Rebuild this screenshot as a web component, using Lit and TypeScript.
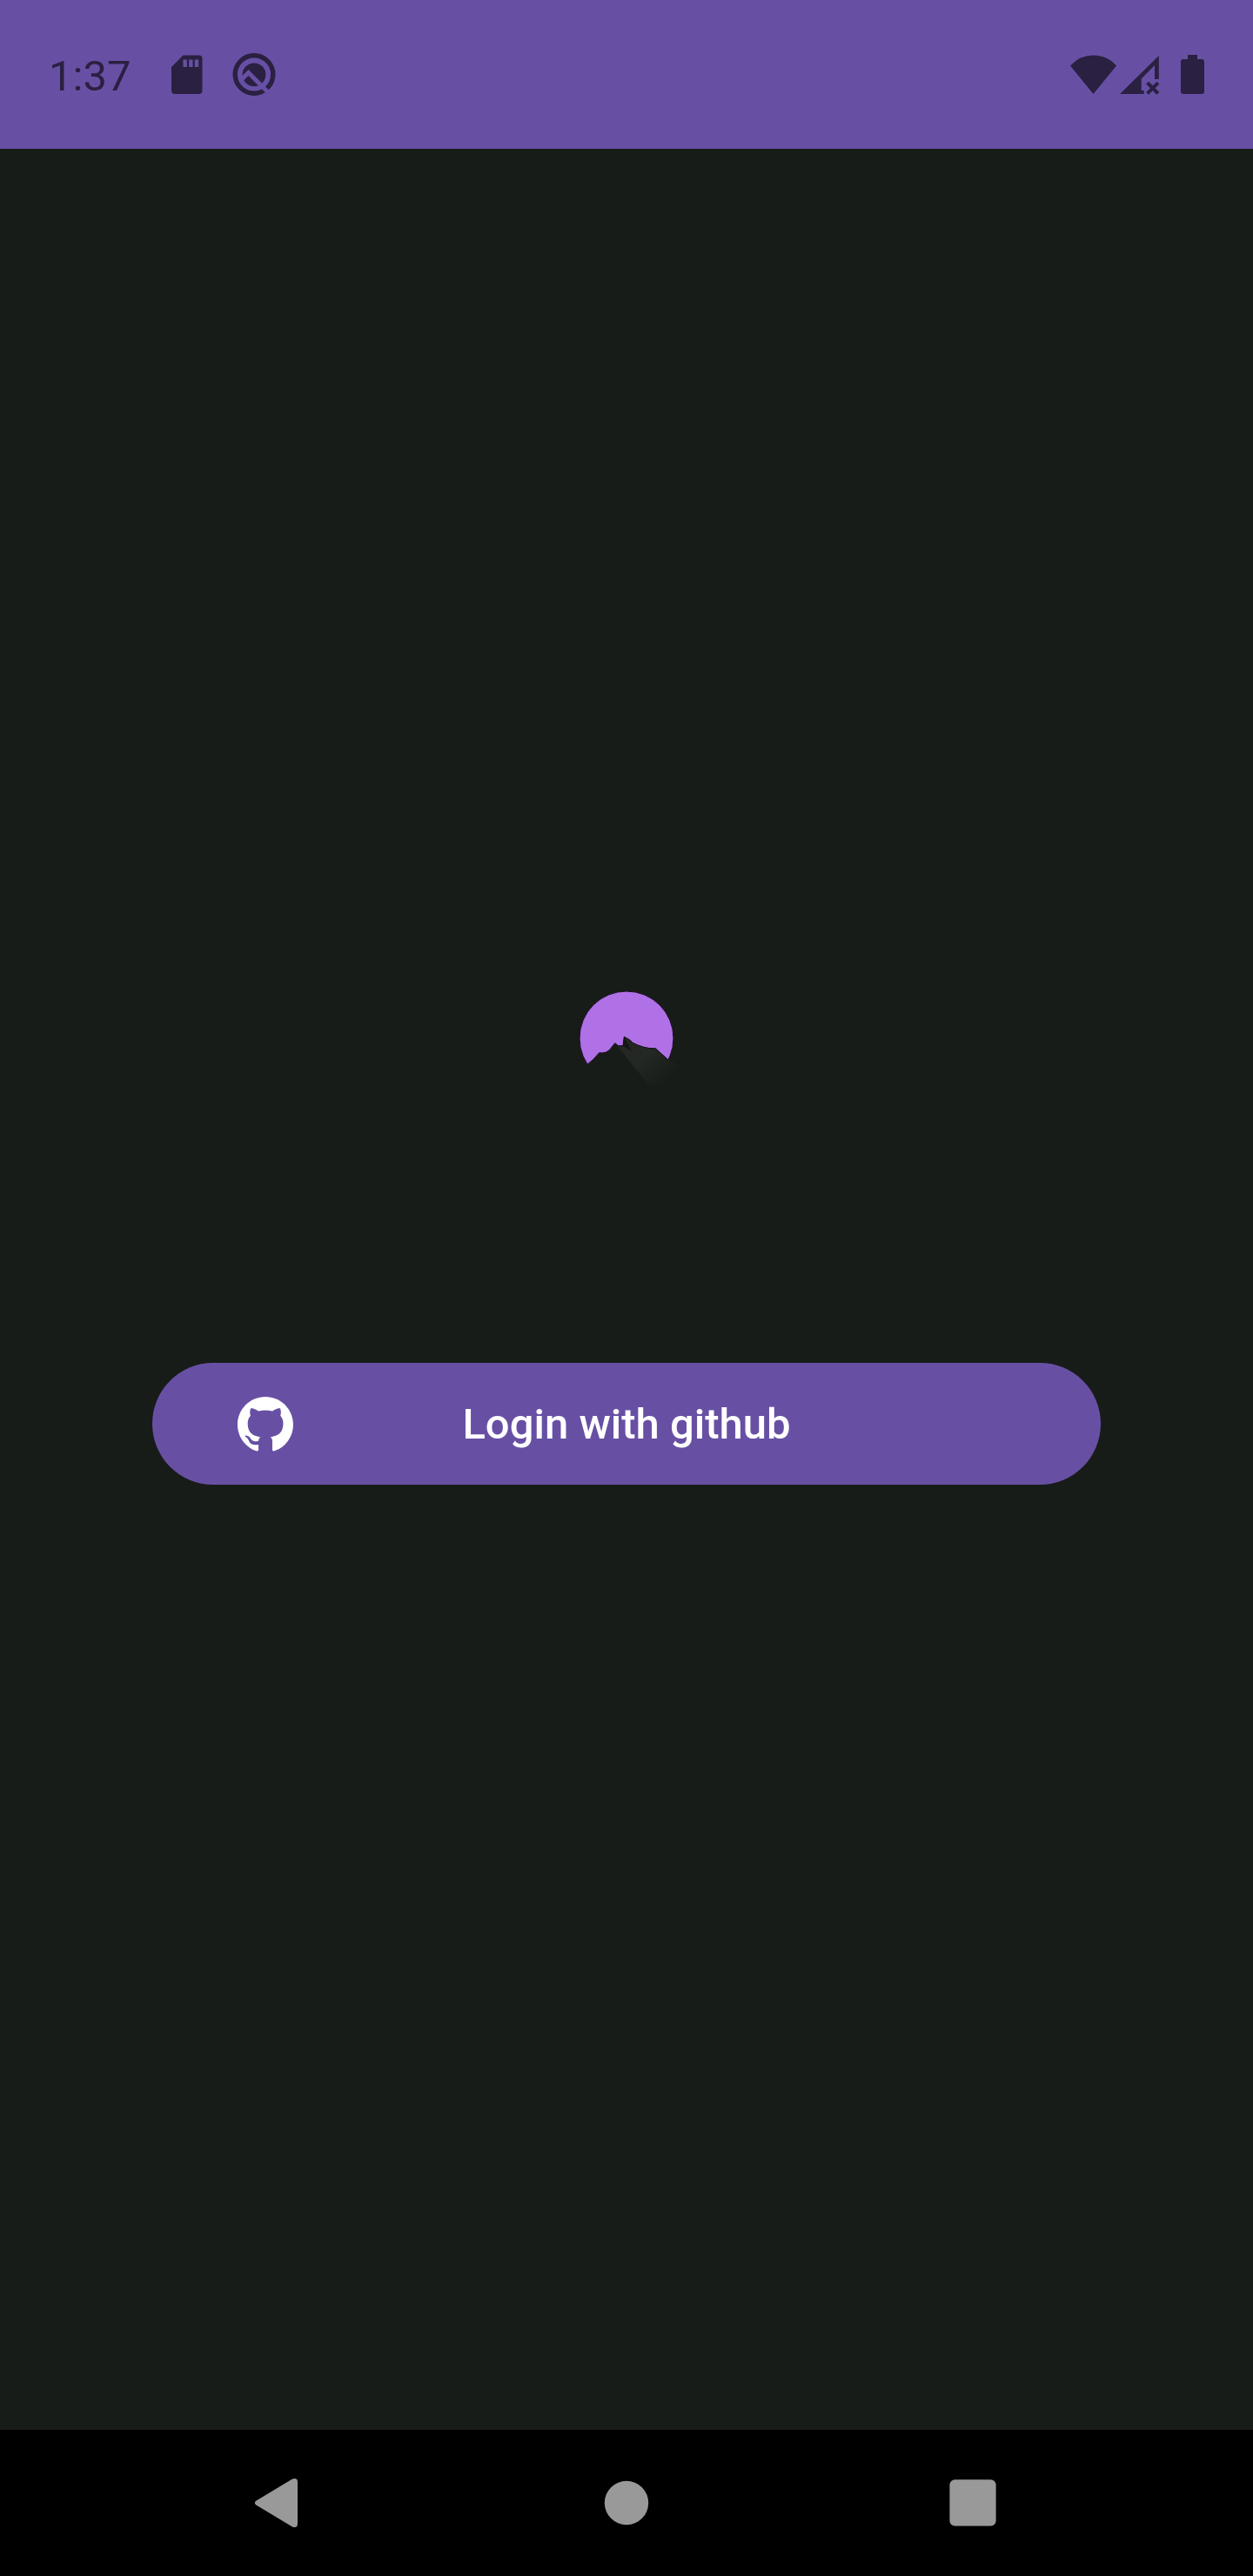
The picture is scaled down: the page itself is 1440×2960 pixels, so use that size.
import { LitElement, html, css } from "lit";
import { customElement } from "lit/decorators.js";

@customElement("status-bar")
class StatusBar extends LitElement {
  static styles = css`
    :host {
      display: flex;
      justify-content: space-between;
      align-items: center;
      height: 171px;
      padding: 0 48px 0 56px;
      box-sizing: border-box;
      background: #6750a4;
      color: #2a2041;
      font: 400 49px/56px Roboto, sans-serif;
    }
    .group { display: flex; align-items: center; }
    .notices { gap: 23px; }
    .clock { padding-top: 4px; margin-right: 15px; }
    svg { display: block; fill: currentColor; }
    .system { gap: 4px; }
    .battery { margin-left: 9px; }
    .slash { fill: none; stroke: #6750a4; stroke-width: 5; }
  `;
  render() {
    return html`
      <div class="group notices">
        <time class="clock" datetime="13:37">1:37</time>
        <svg width="54" height="54" viewBox="0 0 54 54" role="img" aria-label="SD card">
          <path fill-rule="evenodd" d="M22.500 4.500H40.500a4 4 0 0 1 4 4V45a4 4 0 0 1-4 4H13a4 4 0 0 1-4-4V18ZM22.500 9.500V18H26.800V9.500ZM29.200 9.500V18H33.500V9.500ZM35.800 9.500V18H40.200V9.500Z" />
        </svg>
        <svg width="54" height="54" viewBox="0 0 54 54" role="img" aria-label="System update">
          <circle cx="27" cy="26.500" r="21.800" fill="none" stroke="currentColor" stroke-width="5.400" />
          <circle cx="27" cy="26.800" r="13.400" />
          <path class="slash" d="M11 34L20.500 24.500L45 49" />
        </svg>
      </div>
      <div class="group system">
        <svg width="54" height="46" viewBox="0 0 54 46" role="img" aria-label="Wi-Fi">
          <path d="M1 12.500Q12 0.500 27.500 0.500T54 12.500L27.500 45Z" />
        </svg>
        <svg width="46" height="46" viewBox="0 0 46 46" role="img" aria-label="No mobile signal">
          <path d="M0 45 44.800 1V28H40V12L24.700 27.500V41H27.700V45Z" />
          <path d="M33 33.500 42.500 43M42.500 33.500 33 43" fill="none" stroke="currentColor" stroke-width="4" stroke-linecap="square" />
        </svg>
        <svg class="battery" width="46" height="46" viewBox="0 0 46 46" role="img" aria-label="Battery">
          <path d="M19 0H30V5H35a3 3 0 0 1 3 3V42a3 3 0 0 1-3 3H14a3 3 0 0 1-3-3V8a3 3 0 0 1 3-3H19Z" />
        </svg>
      </div>
    `;
  }
}

@customElement("login-view")
class LoginView extends LitElement {
  static styles = css`
    :host {
      display: flex;
      flex-direction: column;
      align-items: center;
      justify-content: center;
      gap: 317px;
      padding: 0 175px 128px;
      background: #181c18;
    }
    svg { display: block; }
    .login {
      display: grid;
      grid-template-columns: 64px 1fr 64px;
      align-items: center;
      box-sizing: border-box;
      width: 100%;
      height: 140px;
      padding: 2px 98px 0;
      border: 0;
      border-radius: 70px;
      background: #6750a4;
      color: #fff;
      font: 500 49px/70px Roboto, sans-serif;
      cursor: pointer;
    }
  `;
  render() {
    return html`
      <svg width="140" height="120" viewBox="0 0 140 120" role="img" aria-label="Mountain at moonrise">
        <defs>
          <linearGradient id="slope" x1="66" y1="66" x2="112" y2="116" gradientUnits="userSpaceOnUse">
            <stop offset="0" stop-color="#232623" />
            <stop offset="0.450" stop-color="#242824" />
            <stop offset="1" stop-color="#181c18" />
          </linearGradient>
        </defs>
        <circle cx="70" cy="64" r="54" fill="#b070e6" stroke="#150b20" stroke-width="1" />
        <path fill="#181c18" d="M0 120V94H25Q31 90 38.700 80.700Q47 82 51.700 76L56.700 69.700L60.700 72.700H66L67.300 62.300L73.300 65.700L77.300 69.300Q82 72 90 74.300Q96 76 103.300 75.700L117.700 88.700L140 93V120Z" />
        <path fill="url(#slope)" d="M58 71L60.700 72.700H66L67.300 62.300L73.300 65.700L77.300 69.300Q82 72 90 74.300Q96 76 103.300 75.700L117.700 88.700L140 98L112 117H95Z" />
        <path fill="#141714" d="M67.300 62.300L76 79L66 72.700Z" />
        <path fill="none" stroke="#140f18" stroke-width="1" d="M25 94Q31 90 38.700 80.700Q47 82 51.700 76L56.700 69.700L60.700 72.700H66L67.300 62.300L73.300 65.700L77.300 69.300Q82 72 90 74.300Q96 76 103.300 75.700L117.700 88.700" />
      </svg>
      <button class="login" type="button">
        <svg width="64" height="64" viewBox="0 0 16 16" fill="#fff" aria-hidden="true">
          <path d="M8 0C3.580 0 0 3.580 0 8c0 3.540 2.290 6.530 5.470 7.590.4.070.55-.17.55-.38 0-.19-.01-.82-.01-1.490-2.010.37-2.530-.49-2.690-.94-.09-.23-.48-.94-.82-1.130-.28-.15-.68-.52-.01-.53.63-.01 1.080.58 1.230.82.72 1.210 1.870.87 2.330.66.07-.52.28-.87.51-1.070-1.780-.2-3.640-.89-3.640-3.950 0-.87.31-1.590.82-2.150-.08-.2-.36-1.020.08-2.120 0 0 .67-.21 2.200.82.64-.18 1.320-.27 2-.27s1.360.09 2 .27c1.530-1.040 2.200-.82 2.200-.82.44 1.100.16 1.920.08 2.120.51.56.82 1.270.82 2.150 0 3.070-1.870 3.750-3.650 3.950.29.25.54.73.54 1.480 0 1.070-.01 1.930-.01 2.200 0 .21.15.46.55.38A8 8 0 0 0 16 8c0-4.420-3.580-8-8-8z" />
        </svg>
        <span>Login with github</span>
      </button>
    `;
  }
}

@customElement("navigation-bar")
class NavigationBar extends LitElement {
  static styles = css`
    :host {
      display: flex;
      justify-content: space-between;
      align-items: center;
      height: 168px;
      padding: 0 280px;
      box-sizing: border-box;
      background: #000;
    }
    button { padding: 0; border: 0; background: none; cursor: pointer; }
    svg { display: block; fill: #999; }
  `;
  render() {
    return html`
      <button type="button" aria-label="Back">
        <svg width="84" height="84" viewBox="0 0 84 84">
          <path d="M14.500 39.500Q11 42 14.500 44.500L56 69.500Q62 71.500 62 66V18Q62 12.500 56 14.500Z" />
        </svg>
      </button>
      <button type="button" aria-label="Home">
        <svg width="84" height="84" viewBox="0 0 84 84"><circle cx="42" cy="42" r="25.200" /></svg>
      </button>
      <button type="button" aria-label="Overview">
        <svg width="84" height="84" viewBox="0 0 84 84"><rect x="15.400" y="15.300" width="53.200" height="53.200" rx="6" /></svg>
      </button>
    `;
  }
}

@customElement("app-root")
class AppRoot extends LitElement {
  static styles = css`
    :host {
      display: flex;
      flex-direction: column;
      min-height: 100vh;
      background: #181c18;
    }
    login-view { flex: 1; }
  `;
  render() {
    return html`
      <status-bar></status-bar>
      <login-view></login-view>
      <navigation-bar></navigation-bar>
    `;
  }
}
